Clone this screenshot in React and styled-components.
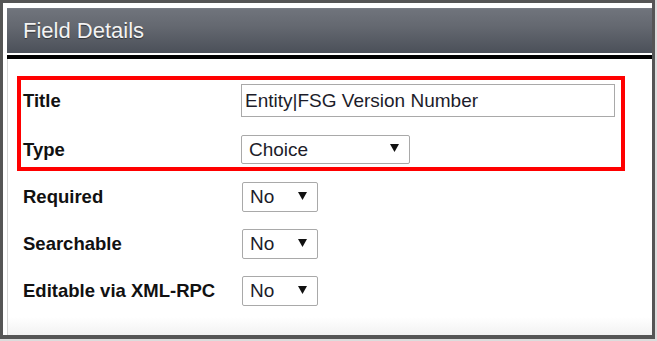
import React from "react";
import styled, { createGlobalStyle } from "styled-components";

const GlobalStyle = createGlobalStyle`
	body {
		margin: 0;
		background: #dcdcdc;
		font-family: "Liberation Sans", Arial, sans-serif;
	}
`;

const Frame = styled.div`
	width: 655px;
	height: 339px;
	box-sizing: border-box;
	border: 3px solid #555;
	border-bottom-width: 4px;
	background: #fff;
	padding: 5px 0 0 4px;
	display: flex;
	flex-direction: column;
`;

const HeaderBar = styled.div`
	height: 45px;
	flex-shrink: 0;
	display: flex;
	align-items: center;
	padding-left: 16px;
	background: linear-gradient(to bottom, #70747c 0%, #646870 40%, #4b5059 100%);
	border-top: 1px solid #777b83;
	box-sizing: border-box;
	color: #f3f3f3;
	font-size: 22px;
	text-shadow: 0 1px 1px rgba(0, 0, 0, 0.45);
`;

const Divider = styled.div`
	height: 4px;
	margin-top: 2px;
	background: #000;
	flex-shrink: 0;
`;

const Body = styled.div`
	flex: 1;
	border-left: 1px solid #d6d6d6;
	background: linear-gradient(to bottom, #fff 0%, #fff calc(100% - 18px), #f2f2f2 100%);
	padding: 17px 0 0 9px;
`;

const Highlight = styled.div`
	width: 608px;
	box-sizing: border-box;
	border: 4px solid #ff0000;
	padding: 4px 0 3px 2px;
	display: flex;
	flex-direction: column;
	gap: 18px;
`;

const Rows = styled.div`
	display: flex;
	flex-direction: column;
	gap: 17px;
	margin-top: 11px;
	padding-left: 6px;
`;

const Row = styled.div`
	display: flex;
	align-items: center;
`;

const Label = styled.div`
	width: 218px;
	flex-shrink: 0;
	font-size: 18.5px;
	font-weight: bold;
	color: #111;
`;

const TextInput = styled.input`
	width: 374px;
	height: 33px;
	box-sizing: border-box;
	border: 1px solid #a9a9a9;
	padding: 0 3px;
	margin: 0;
	font-family: "Liberation Sans", Arial, sans-serif;
	font-size: 19px;
	color: #1c1c2a;
	background: #fff;
	outline: none;
`;

const Select = styled.div`
	width: ${(p) => p.$width}px;
	height: ${(p) => p.$height}px;
	box-sizing: border-box;
	border: 1px solid #a9a9a9;
	border-radius: 2px;
	background: #fff;
	display: flex;
	align-items: center;
	justify-content: space-between;
	padding: 0 10px 0 7px;
	font-size: 19px;
	color: #1c1c2a;
	margin-left: ${(p) => p.$offset || 0}px;
	svg {
		margin-top: -3px;
	}
`;

const Arrow = () => (
	<svg width="9" height="8" viewBox="0 0 9 8">
		<polygon points="0,0 9,0 4.5,8" fill="#111" />
	</svg>
);

const Dropdown = ({ value, width, height = 30, offset }) => (
	<Select $width={width} $height={height} $offset={offset}>
		<span>{value}</span>
		<Arrow />
	</Select>
);

const App = () => {
	return (
		<>
			<GlobalStyle />
			<Frame>
				<HeaderBar>Field Details</HeaderBar>
				<Divider />
				<Body>
					<Highlight>
						<Row>
							<Label>Title</Label>
							<TextInput readOnly defaultValue="Entity|FSG Version Number" />
						</Row>
						<Row>
							<Label>Type</Label>
							<Dropdown value="Choice" width={169} height={29} />
						</Row>
					</Highlight>
					<Rows>
						<Row>
							<Label>Required</Label>
							<Dropdown value="No" width={76} offset={1} />
						</Row>
						<Row>
							<Label>Searchable</Label>
							<Dropdown value="No" width={76} offset={1} />
						</Row>
						<Row>
							<Label>Editable via XML-RPC</Label>
							<Dropdown value="No" width={76} offset={1} />
						</Row>
					</Rows>
				</Body>
			</Frame>
		</>
	);
};

export default App;
